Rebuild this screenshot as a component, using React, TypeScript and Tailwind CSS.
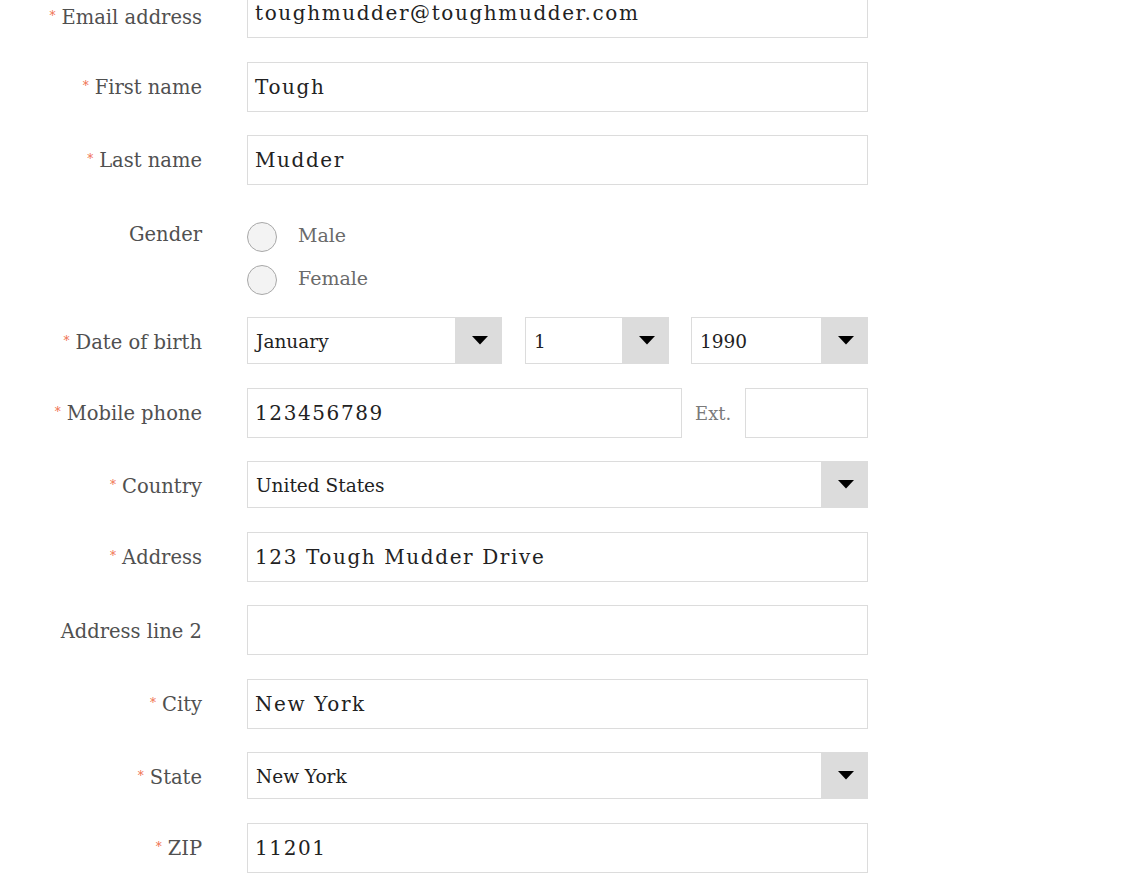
import React from "react";

const labelFont = { fontFamily: '"DejaVu Serif", serif' };

function Label({ text, req, className = "mt-[4px]" }: { text: string; req?: boolean; className?: string }) {
  return (
    <div
      className={`w-[202px] shrink-0 text-right text-[19.5px] text-[#505050] leading-[24px] whitespace-nowrap ${className}`}
      style={labelFont}
    >
      {req && <span className="relative -top-[4px] mr-[6px] text-[12px] text-[#f0704f]">*</span>}
      {text}
    </div>
  );
}

function TextInput({ value, className = "w-[621px]" }: { value: string; className?: string }) {
  return (
    <div
      className={`h-[50px] border border-[#dcdcdc] bg-white flex items-center pl-[7px] text-[20px] tracking-[1.6px] text-[#222] whitespace-nowrap overflow-hidden ${className}`}
      style={labelFont}
    >
      {value}
    </div>
  );
}

function Select({ value, className }: { value: string; className: string }) {
  return (
    <div className={`h-[47px] border border-[#dcdcdc] bg-white flex items-stretch ${className}`}>
      <div
        className="flex-1 flex items-center pl-[8px] pt-[3px] text-[18.5px] text-[#222] whitespace-nowrap overflow-hidden"
        style={labelFont}
      >
        {value}
      </div>
      <div className="w-[47px] -my-px -mr-px bg-[#dcdcdc] flex items-center justify-center pl-[3px]">
        <svg width="16" height="9" viewBox="0 0 16 9">
          <polygon points="0,0 16,0 8,8.5" fill="#000" />
        </svg>
      </div>
    </div>
  );
}

function Row({ children, className = "" }: { children: React.ReactNode; className?: string }) {
  return <div className={`flex items-center ${className}`}>{children}</div>;
}

function Radio({ text }: { text: string }) {
  return (
    <div className="flex items-center h-[30px]">
      <div className="w-[30px] h-[30px] rounded-full border border-[#a8a8a8] bg-[#f3f3f3]" />
      <span className="ml-[21px] -mt-[4px] text-[19px] text-[#6a6a6a]" style={labelFont}>
        {text}
      </span>
    </div>
  );
}

export default function App() {
  return (
    <div className="w-[1130px] h-[887px] bg-white overflow-hidden">
      <div className="flex flex-col -mt-[12px]">
        <Row>
          <Label text="Email address" req className="mt-[12px]" />
          <div className="ml-[45px]">
            <TextInput value="toughmudder@toughmudder.com" />
          </div>
        </Row>
        <Row className="mt-[24px]">
          <Label text="First name" req />
          <div className="ml-[45px]">
            <TextInput value="Tough" />
          </div>
        </Row>
        <Row className="mt-[23px]">
          <Label text="Last name" req />
          <div className="ml-[45px]">
            <TextInput value="Mudder" />
          </div>
        </Row>
        <div className="flex items-start mt-[37px]">
          <Label text="Gender" className="leading-[30px] -mt-[2px]" />
          <div className="ml-[45px] flex flex-col gap-[13px]">
            <Radio text="Male" />
            <Radio text="Female" />
          </div>
        </div>
        <Row className="mt-[22px]">
          <Label text="Date of birth" req className="mt-[6px]" />
          <div className="ml-[45px] flex">
            <Select value="January" className="w-[255px]" />
            <Select value="1" className="w-[144px] ml-[23px]" />
            <Select value="1990" className="w-[177px] ml-[22px]" />
          </div>
        </Row>
        <Row className="mt-[24px]">
          <Label text="Mobile phone" req />
          <div className="ml-[45px] flex items-center">
            <TextInput value="123456789" className="w-[435px]" />
            <span className="ml-[13px] text-[18px] text-[#7a7a7a]" style={labelFont}>
              Ext.
            </span>
            <TextInput value="" className="w-[123px] ml-[14px]" />
          </div>
        </Row>
        <Row className="mt-[23px]">
          <Label text="Country" req className="mt-[7px]" />
          <div className="ml-[45px]">
            <Select value="United States" className="w-[621px]" />
          </div>
        </Row>
        <Row className="mt-[24px]">
          <Label text="Address" req />
          <div className="ml-[45px]">
            <TextInput value="123 Tough Mudder Drive" />
          </div>
        </Row>
        <Row className="mt-[23px]">
          <Label text="Address line 2" />
          <div className="ml-[45px]">
            <TextInput value="" />
          </div>
        </Row>
        <Row className="mt-[24px]">
          <Label text="City" req />
          <div className="ml-[45px]">
            <TextInput value="New York" />
          </div>
        </Row>
        <Row className="mt-[23px]">
          <Label text="State" req className="mt-[7px]" />
          <div className="ml-[45px]">
            <Select value="New York" className="w-[621px]" />
          </div>
        </Row>
        <Row className="mt-[24px]">
          <Label text="ZIP" req />
          <div className="ml-[45px]">
            <TextInput value="11201" />
          </div>
        </Row>
      </div>
    </div>
  );
}
